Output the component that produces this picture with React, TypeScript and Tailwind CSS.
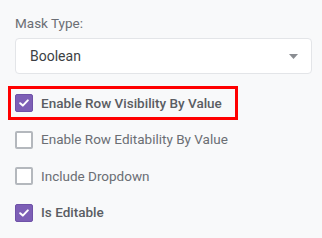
import React from 'react';

const Check: React.FC<{ checked: boolean }> = ({ checked }) =>
  checked ? (
    <span className="flex h-[18px] w-[18px] shrink-0 items-center justify-center rounded-[2px] border border-[#6f52a8] bg-[#7d5fb6]">
      <svg width="10" height="8" viewBox="0 0 10 8" fill="none">
        <path d="M1.2 4.2 L3.8 6.6 L8.8 1.4" stroke="white" strokeWidth="2" strokeLinecap="round" strokeLinejoin="round" />
      </svg>
    </span>
  ) : (
    <span className="h-[18px] w-[18px] shrink-0 rounded-[2px] border-2 border-[#b4b8bd] bg-white" />
  );

const Row: React.FC<{ label: string; checked: boolean; bold?: boolean; boxed?: boolean }> = ({ label, checked, bold, boxed }) => (
  <div
    className={
      boxed
        ? 'flex h-[34px] w-[230px] items-center gap-[8px] border-[3px] border-[#ff0000] pl-[4px] -ml-[7px]'
        : 'flex h-[34px] items-center gap-[8px]'
    }
  >
    <Check checked={checked} />
    <span className={bold ? 'text-[13.5px] font-medium text-[#5a5d63]' : 'text-[13.5px] text-[#6b6e74]'}>{label}</span>
  </div>
);

const App: React.FC = () => {
  return (
    <div className="h-[238px] w-[322px] bg-[#f8f9fa] pl-[15px] pr-[10px] pt-[14px]" style={{ fontFamily: 'Roboto, "Liberation Sans", sans-serif' }}>
      <div className="text-[13.5px] leading-[18px] text-[#6b6e74]">Mask Type:</div>
      <div className="mt-[6px] flex h-[36px] w-[297px] items-center justify-between rounded-[4px] border border-[#e3e5e8] bg-white pl-[14px] pr-[13px]">
        <span className="text-[14px] text-[#3c3f44]">Boolean</span>
        <svg width="9" height="5" viewBox="0 0 9 5">
          <path d="M0 0 H9 L4.5 5 Z" fill="#8a8d92" />
        </svg>
      </div>
      <div className="mt-[12px] flex flex-col gap-[2.5px]">
        <Row label="Enable Row Visibility By Value" checked bold boxed />
        <Row label="Enable Row Editability By Value" checked={false} />
        <Row label="Include Dropdown" checked={false} />
        <Row label="Is Editable" checked bold />
      </div>
    </div>
  );
};

export default App;
